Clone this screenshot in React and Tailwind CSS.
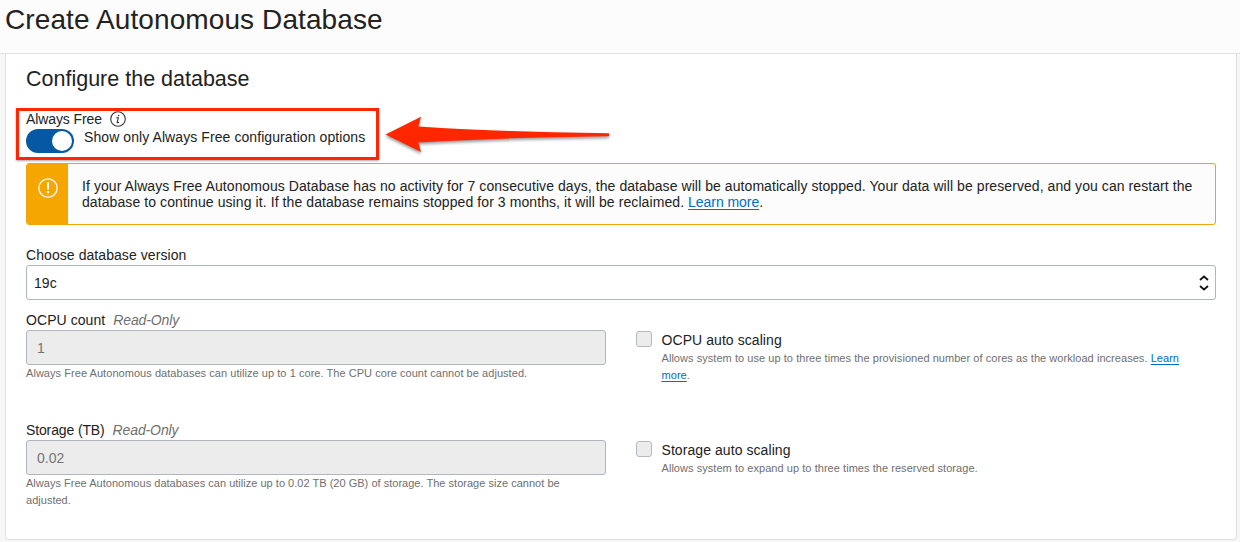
import React from "react";

function ReadOnlyField({ label, labelClass, value, help, helpClass, checkLabel, checkHelp }) {
  return (
    <div className="flex h-[110px]">
      <div className="w-[580px]">
        <div className="flex h-[18px] items-center whitespace-pre leading-[18px]">
          <span className={labelClass}>{label}</span>
          <span className="ml-2 italic tracking-[-0.12px] text-[#6f6f6f]">Read-Only</span>
        </div>
        <div className="mt-px flex h-[35px] items-center rounded-[3px] border border-[#b1b5bf] bg-[#ececec] pl-2.5 pt-px tracking-normal text-[#757575]">
          {value}
        </div>
        <div className={`text-[11px] leading-[17px] text-[#6f6f6f] ${helpClass}`}>{help}</div>
      </div>
      <div className="ml-[30px] mt-5 flex">
        <div className="size-4 shrink-0 rounded-[3px] border border-[#b4b8c2] bg-[#ececec]" />
        <div className="ml-[9.5px]">
          <div className="mb-px h-[18px] leading-[18px]">{checkLabel}</div>
          <div className="whitespace-nowrap text-[11px] leading-[17px] tracking-[0.05px] text-[#6f6f6f]">{checkHelp}</div>
        </div>
      </div>
    </div>
  );
}

const link = "text-[#006dc7] underline underline-offset-2";

export default function App() {
  return (
    <div className="relative flex h-[542px] w-[1240px] flex-col overflow-hidden bg-[#f7f7f7] font-['Liberation_Sans',Arial,sans-serif] text-[14px] tracking-[0.07px] text-[#222]">
      <header className="h-[54px] shrink-0 border-b border-[#e1e1e3] bg-[#fcfcfc] pl-[5px] pt-[3px]">
        <h1 className="text-[28px] leading-[34px] tracking-[0.1px]">Create Autonomous Database</h1>
      </header>
      <main className="ml-[5px] h-[486px] w-[1232px] shrink-0 rounded-b-[4px] border border-t-0 border-[#dedfe2] bg-white px-5">
        <h2 className="pt-3 text-[21.5px] leading-[26px] tracking-normal">Configure the database</h2>
        <div className="mt-[18px] flex h-[18px] items-center leading-[18px]">
          <span className="tracking-[-0.1px]">Always Free</span>
          <svg className="ml-2" width="16" height="16" viewBox="0 0 16 16" fill="none" stroke="#333">
            <circle cx="8" cy="8" r="7.3" strokeWidth="1.1" />
            <path d="M6.3 6.8H8.3L7.2 11.2Q7.1 12 9.1 11.2" strokeWidth="1.1" />
            <circle cx="8.6" cy="4.5" r=".8" fill="#333" stroke="none" />
          </svg>
        </div>
        <div className="flex h-6">
          <div className="mt-px flex h-6 w-12 items-center justify-end rounded-full bg-[#0459a2] pr-0.5">
            <div className="size-5 rounded-full bg-white" />
          </div>
          <span className="ml-2.5 leading-[18px] tracking-[0.08px]">Show only Always Free configuration options</span>
        </div>
        <section className="mt-[11px] flex h-[62px] overflow-hidden rounded-[3px] border border-[#f0a30a] bg-[#fcfcfc]">
          <div className="w-[41px] shrink-0 bg-[#f5a600] pl-[11px] pt-3.5">
            <svg width="20" height="20" viewBox="0 0 20 20" fill="none">
              <circle cx="10" cy="10" r="9.2" stroke="#fff" strokeWidth="1.3" />
              <path d="M10 4.2V11.6M10 13V15.3" stroke="#fff" strokeWidth="2.1" />
            </svg>
          </div>
          <p className="ml-3.5 mt-3.5 whitespace-nowrap leading-4">
            If your Always Free Autonomous Database has no activity for 7 consecutive days, the database will be automatically stopped. Your data will be preserved, and you can restart the
            <br />
            <span className="tracking-[0.085px]">database to continue using it. If the database remains stopped for 3 months, it will be reclaimed. </span>
            <a className={`${link} tracking-[-0.05px]`}>Learn more</a>.
          </p>
        </section>
        <div className="mt-[21px] h-[18px] leading-[18px]">Choose database version</div>
        <div className="mt-px flex h-[35px] items-center justify-between rounded-[3px] border border-[#b1b5bf] pl-[7px] pr-1.5 pt-px">
          19c
          <svg width="10" height="16" viewBox="0 0 10 16" fill="none" stroke="#111" strokeWidth="1.7">
            <path d="M1 5L5 1.5L9 5M1 11L5 14.5L9 11" />
          </svg>
        </div>
        <div className="mt-[11px]">
          <ReadOnlyField
            label="OCPU count"
            value="1"
            helpClass="tracking-[0.05px]"
            help="Always Free Autonomous databases can utilize up to 1 core. The CPU core count cannot be adjusted."
            checkLabel="OCPU auto scaling"
            checkHelp={<>Allows system to use up to three times the provisioned number of cores as the workload increases. <a className={link}>Learn<br />more</a>.</>}
          />
          <ReadOnlyField
            label="Storage (TB)"
            labelClass="tracking-[-0.13px]"
            value="0.02"
            helpClass="tracking-[0.02px]"
            help={<>Always Free Autonomous databases can utilize up to 0.02 TB (20 GB) of storage. The storage size cannot be<br />adjusted.</>}
            checkLabel="Storage auto scaling"
            checkHelp="Allows system to expand up to three times the reserved storage."
          />
        </div>
      </main>
      <div className="absolute left-[15.5px] top-[107.5px] h-[52px] w-[363px] border-[3px] border-[#ff2600] shadow-[0_1px_2px_rgba(0,0,0,0.35)]" />
      <svg className="absolute left-[380px] top-[110px] drop-shadow-[0_2px_1.5px_rgba(0,0,0,0.4)]" width="235" height="50" viewBox="380 110 235 50">
        <path d="M385.5 134.5L421 116.8L418.3 126.5Q500 132 609 133.3V136.2Q500 137.5 418.3 142.5L421 152Z" fill="#ff2600" />
      </svg>
    </div>
  );
}
